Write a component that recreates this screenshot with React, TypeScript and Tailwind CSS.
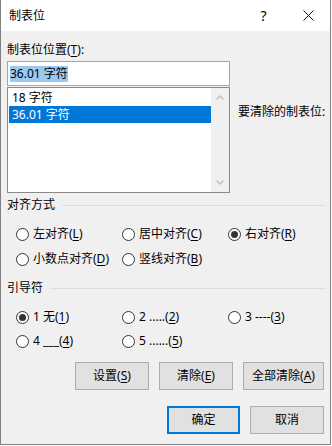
import type { ReactNode } from "react";

function Radio({ checked, children }: { checked?: boolean; children: ReactNode }) {
  return (
    <div className="flex items-center h-[20px]">
      <span className="w-[13px] h-[13px] rounded-full border border-[#333333] bg-white flex items-center justify-center shrink-0">
        {checked && <span className="w-[7px] h-[7px] rounded-full bg-[#333333]" />}
      </span>
      <span className="ml-[4px] text-[12px] leading-[16px] whitespace-nowrap">{children}</span>
    </div>
  );
}

function Heading({ children }: { children: ReactNode }) {
  return (
    <div className="flex items-center h-[16px]">
      <span className="text-[12px] leading-[16px] whitespace-nowrap">{children}</span>
      <div className="flex-1 h-px bg-[#dcdcdc] ml-[7px]" />
    </div>
  );
}

function Btn({ w, primary, children }: { w: string; primary?: boolean; children: ReactNode }) {
  return (
    <button
      className={
        "h-[28px] flex items-center justify-center text-[12px] leading-[16px] bg-[#e1e1e1] " +
        w +
        (primary ? " border-2 border-[#0078d7]" : " border border-[#adadad]")
      }
    >
      {children}
    </button>
  );
}

const U = ({ c }: { c: string }) => <u className="underline-offset-2">{c}</u>;

export default function App() {
  return (
    <div className="min-h-screen bg-white font-['Noto_Sans','Noto_Sans_CJK_SC',sans-serif] text-black">
      <div className="w-[331px] h-[445px] bg-[#f0f0f0] border-x border-b border-[#7f7f7f] flex flex-col">
        {/* title bar */}
        <div className="h-[31px] bg-white flex items-center shrink-0">
          <span className="pl-[8px] text-[12px] leading-[16px]">制表位</span>
          <div className="flex-1" />
          <span className="w-[45px] text-center text-[14px] leading-[16px]">?</span>
          <span className="w-[44px] flex items-center justify-center">
            <svg width="11" height="11" viewBox="0 0 11 11">
              <path d="M0.5 0.5L10.5 10.5M10.5 0.5L0.5 10.5" stroke="#111" strokeWidth="1" />
            </svg>
          </span>
        </div>

        <div className="pl-[6px] pr-[4px] flex flex-col">
          <div className="mt-[11px] text-[12px] leading-[16px]">
            制表位位置(<U c="T" />):
          </div>

          <div className="flex mt-[3px]">
            <div className="w-[223px] flex flex-col">
              <div className="h-[25px] border border-[#a6a6a6] bg-white flex items-center pl-[2px]">
                <span className="bg-[#99c9ef] text-[12px] leading-[16px]">36.01 字符</span>
              </div>
              <div className="mt-[1px] h-[106px] border border-[#8a8a8a] bg-white flex">
                <div className="flex-1 pt-[1px] pl-[1px] text-[12px]">
                  <div className="h-[17px] flex items-center pl-[3px] leading-[16px]">18 字符</div>
                  <div className="h-[17px] w-[202px] flex items-center pl-[3px] leading-[16px] bg-[#0078d7] text-white">
                    36.01 字符
                  </div>
                </div>
                <div className="w-[18px] bg-[#f0f0f0] flex flex-col items-center justify-between py-[7px]">
                  <svg width="8" height="5" viewBox="0 0 8 5">
                    <polyline points="0.5,4.5 4,1 7.5,4.5" fill="none" stroke="#c2c2c2" strokeWidth="1.4" />
                  </svg>
                  <svg width="8" height="5" viewBox="0 0 8 5">
                    <polyline points="0.5,0.5 4,4 7.5,0.5" fill="none" stroke="#c2c2c2" strokeWidth="1.4" />
                  </svg>
                </div>
              </div>
            </div>
            <div className="ml-[8px] mt-[43px] text-[12px] leading-[16px] whitespace-nowrap">要清除的制表位:</div>
          </div>

          <div className="mt-[4px]">
            <Heading>对齐方式</Heading>
          </div>
          <div className="mt-[11px] pl-[9px] grid grid-cols-[106px_106px_106px] gap-y-[5px]">
            <Radio>
              左对齐(<U c="L" />)
            </Radio>
            <Radio>
              居中对齐(<U c="C" />)
            </Radio>
            <Radio checked>
              右对齐(<U c="R" />)
            </Radio>
            <Radio>
              小数点对齐(<U c="D" />)
            </Radio>
            <Radio>
              竖线对齐(<U c="B" />)
            </Radio>
          </div>

          <div className="mt-[11px]">
            <Heading>引导符</Heading>
          </div>
          <div className="mt-[11px] pl-[9px] grid grid-cols-[106px_106px_106px] gap-y-[4px]">
            <Radio checked>
              1 无(<U c="1" />)
            </Radio>
            <Radio>
              2 .....(<U c="2" />)
            </Radio>
            <Radio>
              3 ----(<U c="3" />)
            </Radio>
            <Radio>
              4 ___(<U c="4" />)
            </Radio>
            <Radio>
              5 ......(<U c="5" />)
            </Radio>
          </div>

          <div className="mt-[11px] flex justify-end gap-[10px] pr-[2px]">
            <Btn w="w-[74px]">
              设置(<U c="S" />)
            </Btn>
            <Btn w="w-[74px]">
              清除(<U c="E" />)
            </Btn>
            <Btn w="w-[81px]">
              全部清除(<U c="A" />)
            </Btn>
          </div>
          <div className="mt-[16px] flex justify-end gap-[10px] pr-[2px]">
            <Btn w="w-[73px]" primary>
              确定
            </Btn>
            <Btn w="w-[74px]">取消</Btn>
          </div>
        </div>
      </div>
    </div>
  );
}
